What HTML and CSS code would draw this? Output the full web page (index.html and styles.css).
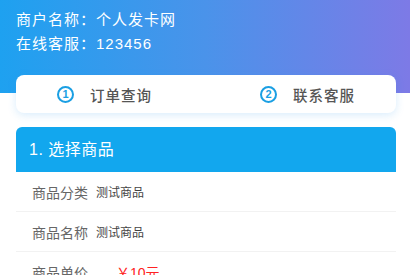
FILE: index.html
```html
<!DOCTYPE html>
<html lang="zh-CN">
<head>
    <meta charset="UTF-8">
    <meta name="viewport" content="width=device-width, initial-scale=1.0">
    <title>个人发卡网</title>
    <link rel="stylesheet" href="styles.css">
</head>
<body>
    <div class="header">
        <p>商户名称：个人发卡网</p>
        <p>在线客服：123456</p>
    </div>
    <div class="nav">
        <a class="nav-item" href="#"><span class="num">1</span>订单查询</a>
        <a class="nav-item" href="#"><span class="num">2</span>联系客服</a>
    </div>
    <div class="panel">
        <div class="panel-title">1. 选择商品</div>
        <div class="row">
            <span class="label">商品分类</span>
            <span class="value">测试商品</span>
        </div>
        <div class="row">
            <span class="label">商品名称</span>
            <span class="value">测试商品</span>
        </div>
        <div class="row">
            <span class="label">商品单价</span>
            <span class="price">￥10元</span>
        </div>
    </div>
</body>
</html>
```

FILE: styles.css
```css
* {
    margin: 0;
    padding: 0;
    box-sizing: border-box;
    font-family: "Liberation Sans", "Noto Sans CJK SC", sans-serif;
}

body {
    background: #fff;
    color: #333;
}

.header {
    height: 93px;
    padding: 8px 16px 0;
    background: linear-gradient(90deg, #1ea1f0 0%, #4a93ea 50%, #7d7ae6 100%);
    color: #fff;
    font-size: 15px;
    line-height: 24px;
    letter-spacing: 1px;
}

.nav {
    display: flex;
    justify-content: space-between;
    align-items: center;
    height: 38px;
    margin: -18px 14px 0 16px;
    padding: 0 41px;
    background: #fff;
    border-radius: 8px;
    box-shadow: 0 2px 8px rgba(40, 150, 240, 0.18);
}

.nav-item {
    display: flex;
    align-items: center;
    color: #555;
    font-size: 14.5px;
    font-weight: 500;
    text-decoration: none;
    letter-spacing: 1px;
}

/* circled step number */
.num {
    display: flex;
    justify-content: center;
    align-items: center;
    width: 17px;
    height: 17px;
    margin-right: 16px;
    border: 2px solid #1a9fe3;
    border-radius: 50%;
    color: #1a9fe3;
    font-size: 11px;
    font-weight: bold;
    letter-spacing: 0;
}

.panel {
    margin: 14px 14px 0 16px;
}

.panel-title {
    height: 45px;
    padding: 0 13px;
    background: #12a7ee;
    border-radius: 6px 6px 0 0;
    color: #fff;
    font-size: 16px;
    line-height: 45px;
    letter-spacing: 0.5px;
}

.row {
    display: flex;
    align-items: center;
    height: 40px;
    padding: 0 16px;
    border-bottom: 1px solid #f2f2f2;
}

.label {
    color: #666;
    font-size: 14px;
    margin-right: 8px;
}

.value {
    color: #444;
    font-size: 12px;
}

.price {
    color: #f22;
    font-size: 14px;
    margin-left: 20px;
}
```
